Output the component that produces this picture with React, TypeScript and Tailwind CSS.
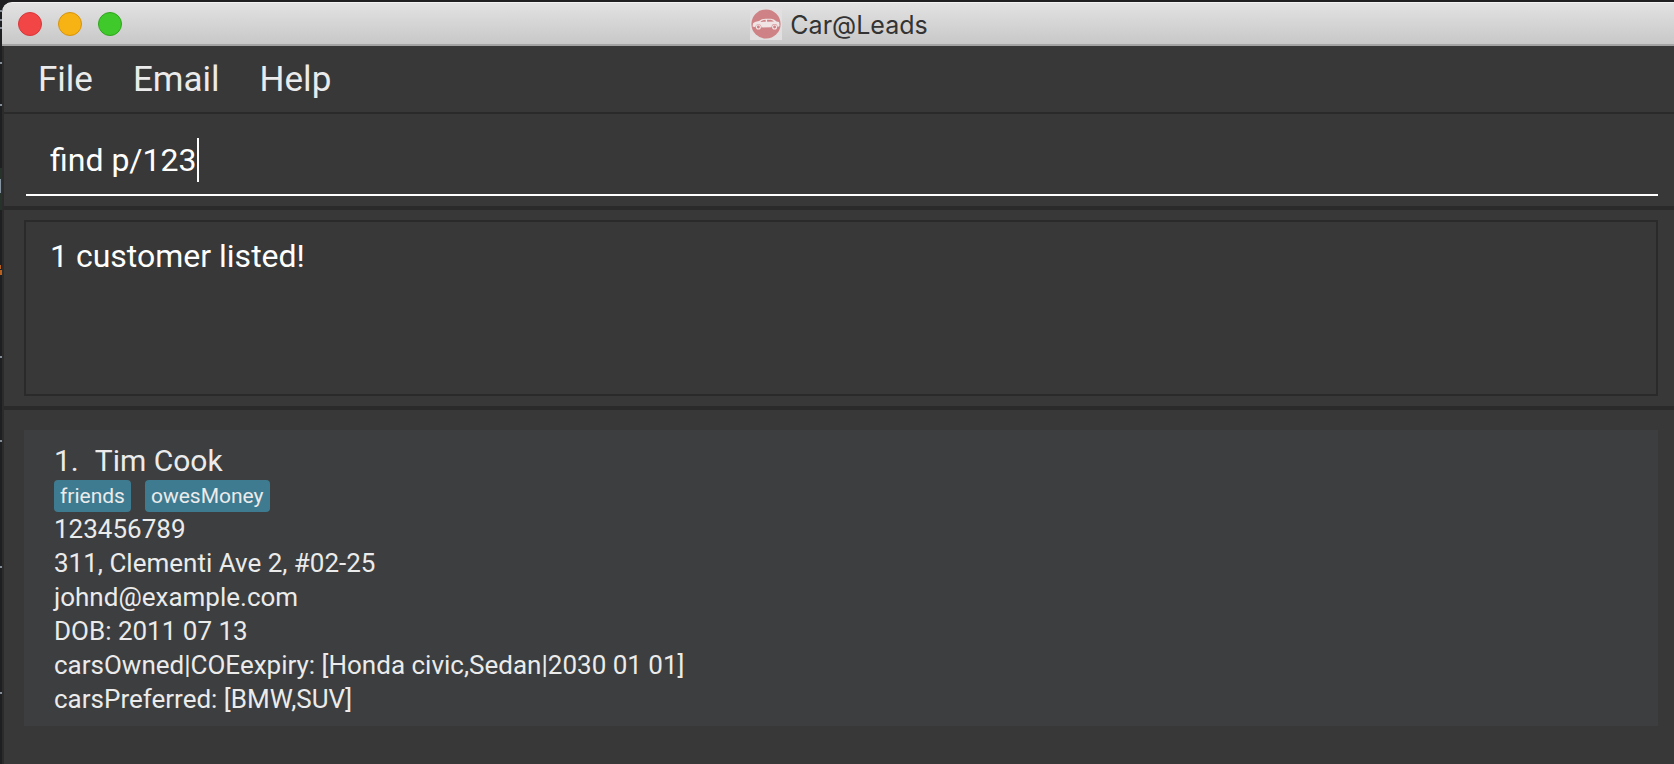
import { useState } from "react";

const menus = ["File", "Email", "Help"];

const tags = ["friends", "owesMoney"];

const details = [
  "123456789",
  "311, Clementi Ave 2, #02-25",
  "johnd@example.com",
  "DOB: 2011 07 13",
  "carsOwned|COEexpiry: [Honda civic,Sedan|2030 01 01]",
  "carsPreferred: [BMW,SUV]",
];

function CarLogo() {
  return (
    <svg width="32" height="32" viewBox="0 0 32 32" aria-hidden="true">
      <rect width="32" height="32" fill="#e1dfdf" />
      <circle cx="16" cy="16" r="14.6" fill="#ce8285" />
      <path
        d="M2.6 18.6 L3 15.4 Q4 13.6 9 12.9 Q12 10.8 15.5 10.7 L21 10.8 Q24 11.2 26.6 13.4 L29 14 Q29.6 16 29.4 18.2 L27.6 19 A3 3 0 0 0 21.6 19.2 L11.4 19.4 A3 3 0 0 0 5.4 19.2 Z"
        fill="#f0e4e4"
      />
      <path d="M10.8 13.4 Q13 11.8 15.6 11.7 L15.8 13.8 L10.6 13.9 Z" fill="#ce8285" />
      <path d="M17 11.7 L20.8 11.8 Q22.6 12.2 24 13.5 L17.2 13.8 Z" fill="#ce8285" />
      <circle cx="8.4" cy="19" r="2" fill="none" stroke="#f0e4e4" strokeWidth="1.1" />
      <circle cx="24.6" cy="19" r="2" fill="none" stroke="#f0e4e4" strokeWidth="1.1" />
    </svg>
  );
}

function DesktopEdge() {
  return (
    <svg className="w-0.5 shrink-0 bg-[#1e1f21]" height="762" viewBox="0 2 2 762" aria-hidden="true">
      <path
        d="M0 10h2v2H0z M0 19h2v2H0z M0 27h2v2H0z M0 62h2v2H0z M0 104h2v2H0z M0 195h2v2H0z M0 356h2v2H0z M0 440h2v2H0z M0 566h2v2H0z M0 692h2v2H0z"
        fill="#858d98"
      />
      <path d="M0 168h2v42H0z" fill="#26332a" />
      <path d="M0 179h1v14H0z" fill="#8693a0" />
      <path d="M0 265h1v4H0z M0 270h2v5H0z" fill="#b9601f" />
    </svg>
  );
}

export default function App() {
  const [command, setCommand] = useState("find p/123");

  return (
    <div className="flex min-h-screen bg-[#1f1e20] pt-0.5 font-['Roboto','Liberation_Sans',sans-serif]">
      <DesktopEdge />
      <div className="flex min-w-0 flex-1 flex-col rounded-tl-[10px] bg-[#383838]">
        <header className="flex h-11 items-center rounded-tl-[10px] border-t border-b-2 border-t-[#f2f2f2] border-b-[#a3a3a3] bg-linear-to-b from-[#e2e2e2] to-[#c8c8c8] pr-3.5 pl-4">
          <div className="flex flex-1 gap-4">
            <button aria-label="Close" className="size-6 rounded-full border border-[#d9363a] bg-[#f24646]" />
            <button aria-label="Minimize" className="size-6 rounded-full border border-[#d6930f] bg-[#f6b313]" />
            <button aria-label="Zoom" className="size-6 rounded-full border border-[#2fa51d] bg-[#40c92a]" />
          </div>
          <div className="flex items-center gap-2">
            <CarLogo />
            <h1 className="pt-0.5 font-['Inter','Liberation_Sans',sans-serif] text-[25px] leading-8 text-[#333333]">
              Car@Leads
            </h1>
          </div>
          <div className="flex-1" />
        </header>

        <div className="flex flex-1 flex-col border-l-2 border-[#2b2b2b]">
          <nav className="flex h-[68px] items-center gap-10 border-b-2 border-[#2a2a2a] px-[34px] pt-0.5 text-[35px] text-[#ebebeb]">
            {menus.map((m) => (
              <button key={m}>{m}</button>
            ))}
          </nav>

          <section className="border-b-4 border-[#2a2a2a] pt-4 pr-4 pb-2.5 pl-[22px]">
            <label className="flex h-[66px] items-center border-b-2 border-white pb-1 pl-6 text-[32px] text-white">
              <input
                aria-label="Command"
                className="field-sizing-content bg-transparent caret-transparent outline-none"
                value={command}
                onChange={(e) => setCommand(e.target.value)}
              />
              <span className="h-11 w-0.5 bg-white" />
            </label>
          </section>

          <section className="border-b-4 border-[#2a2a2a] py-2.5 pr-4 pl-5">
            <textarea
              aria-label="Result"
              readOnly
              className="block h-44 w-full resize-none border-2 border-[#2a2a2a] bg-transparent px-6 py-3 text-[32px] leading-[44px] text-white outline-none"
              value="1 customer listed!"
            />
          </section>

          <main className="pt-5 pr-4 pb-9 pl-5">
            <article className="bg-[#3c3e3f] px-[30px] pt-3 pb-2.5 text-[26px] leading-[34px] text-[#ebebeb]">
              <h2 className="flex gap-4 text-[30px] leading-[38px]">
                <span>1.</span>
                <span>Tim Cook</span>
              </h2>
              <ul className="flex gap-3.5 text-[21px] leading-8">
                {tags.map((t) => (
                  <li key={t} className="rounded-[4px] bg-[#3e7b91] px-1.5">
                    {t}
                  </li>
                ))}
              </ul>
              {details.map((d) => (
                <p key={d}>{d}</p>
              ))}
            </article>
          </main>
        </div>
      </div>
    </div>
  );
}
